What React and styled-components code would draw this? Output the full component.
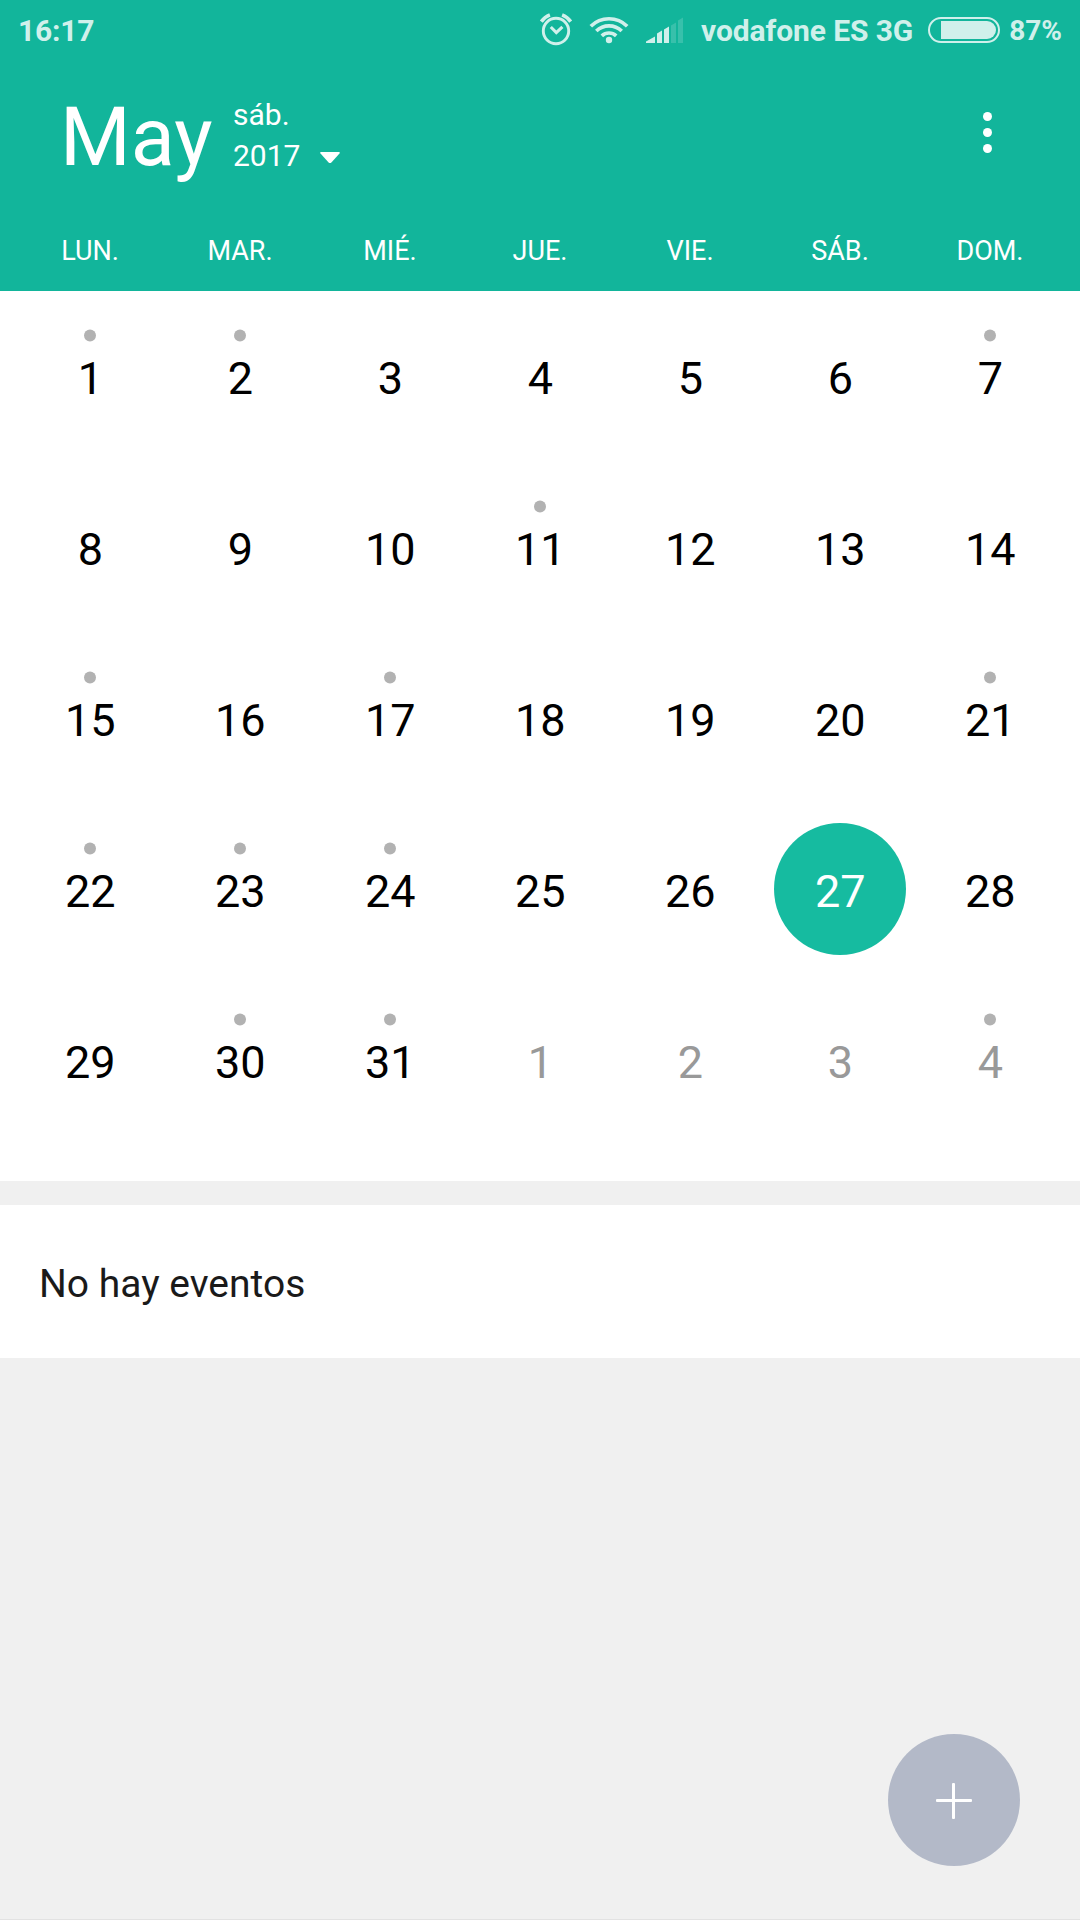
import React from "react";
import styled, { createGlobalStyle } from "styled-components";

const teal = "#12b59b";
const statusTint = "#d0f0eb";

const GlobalStyle = createGlobalStyle`
  * { box-sizing: border-box; }
  body { margin: 0; background: #f0f0f0; font-family: Roboto, "Liberation Sans", sans-serif; }
`;

const Screen = styled.div`
  width: 1080px;
  height: 1920px;
  display: flex;
  flex-direction: column;
  background: #f0f0f0;
  border-bottom: 1px solid #e2e2e2;
  overflow: hidden;
`;

const Header = styled.header`
  height: 291px;
  flex: none;
  display: flex;
  flex-direction: column;
  background: ${teal};
  color: #fff;
`;

const StatusBar = styled.div`
  height: 60px;
  display: flex;
  align-items: center;
  justify-content: space-between;
  padding: 0 18px 0 18px;
  color: ${statusTint};
`;

const StatusText = styled.span`
  font-size: ${(p) => p.$size || 30}px;
  font-weight: 700;
  letter-spacing: ${(p) => p.$tracking || 0}px;
  line-height: 40px;
  padding-top: 1px;
  white-space: nowrap;
`;

const StatusGroup = styled.div`
  display: flex;
  align-items: center;
`;

const StatusIcons = styled.svg`
  display: block;
  width: 150px;
  height: 60px;
  margin-right: 15.5px;
`;

const Battery = styled.div`
  width: 72px;
  height: 26px;
  margin: 0 9px 0 15px;
  padding: 2px 2px 2px 11px;
  border: 2px solid ${statusTint};
  border-radius: 13px;
`;

const BatteryLevel = styled.div`
  height: 18px;
  background: ${statusTint};
  border-radius: 0 9px 9px 0;
`;

const TitleRow = styled.div`
  height: 150px;
  display: flex;
  align-items: flex-start;
  padding: 0 88px 0 60px;
`;

const Month = styled.h1`
  margin: 30px 0 0;
  width: 173px;
  font-size: 81px;
  font-weight: 400;
  line-height: 96px;
`;

const DateInfo = styled.div`
  flex: 1;
  margin-top: 35px;
  font-size: 30px;
  line-height: 40px;
`;

const YearLine = styled.div`
  display: flex;
  align-items: center;
  gap: 20px;
  margin-top: 1px;
`;

const Caret = styled.svg`
  width: 20px;
  height: 12px;
  margin-top: 4px;
`;

const MenuButton = styled.button`
  display: flex;
  flex-direction: column;
  gap: 7px;
  margin: 52px 0 0;
  padding: 0;
  border: 0;
  background: none;
`;

const MenuDot = styled.span`
  width: 9px;
  height: 9px;
  border-radius: 50%;
  background: #fff;
`;

const WeekRow = styled.div`
  display: grid;
  grid-template-columns: repeat(7, 150px);
  padding: 21px 15px 0;
`;

const Weekday = styled.div`
  font-size: 27px;
  line-height: 40px;
  text-align: center;
`;

const Calendar = styled.main`
  height: 890px;
  flex: none;
  display: grid;
  grid-template-columns: repeat(7, 150px);
  grid-auto-rows: 171px;
  padding: 0 15px;
  background: #fff;
`;

const DayCell = styled.div`
  position: relative;
  display: flex;
  justify-content: center;
  padding-top: 19px;
`;

const DayNumber = styled.div`
  width: 132px;
  height: 132px;
  padding: 5px 0 0 ${(p) => (p.$narrow ? 1 : 0.4)}px;
  border-radius: 50%;
  font-size: 45px;
  line-height: 127px;
  text-align: center;
  color: ${(p) => (p.$selected ? "#fff" : p.$muted ? "#999" : "#000")};
  background: ${(p) => (p.$selected ? "#16bba0" : "transparent")};
`;

const EventDot = styled.span`
  position: absolute;
  top: 38px;
  left: 69px;
  width: 12px;
  height: 12px;
  border-radius: 50%;
  background: #b2b2b2;
  transform: translateY(0.5px);
`;

const EventCard = styled.section`
  height: 153px;
  flex: none;
  margin-top: 24px;
  padding: 5px 39px 0;
  background: #fff;
  color: #1a1a1a;
  font-size: 39px;
  line-height: 149px;
`;

const Footer = styled.footer`
  flex: 1;
  display: flex;
  justify-content: flex-end;
  align-items: flex-end;
  padding: 0 60px 53px 0;
`;

const AddButton = styled.button`
  width: 132px;
  height: 132px;
  padding: 0;
  border: 0;
  border-radius: 50%;
  background: #b3b9c8;
`;

const PlusIcon = styled.svg`
  display: block;
  width: 132px;
  height: 132px;
`;

const weekdays = ["LUN.", "MAR.", "MIÉ.", "JUE.", "VIE.", "SÁB.", "DOM."];
const eventDays = new Set([1, 2, 7, 11, 15, 17, 21, 22, 23, 24, 30, 31, 35]);
const days = Array.from({ length: 35 }, (_, i) => {
  const n = i + 1;
  return { id: n, label: n > 31 ? n - 31 : n, muted: n > 31, selected: n === 27, event: eventDays.has(n) };
});

export default function App() {
  return (
    <Screen>
      <GlobalStyle />
      <Header>
        <StatusBar>
          <StatusText $tracking={-0.2}>16:17</StatusText>
          <StatusGroup>
            <StatusIcons viewBox="536 0 150 60" fill="none" stroke={statusTint}>
              <circle cx="556" cy="31" r="12.7" strokeWidth="2.9" />
              <path d="M550.8 27l5.5 5.6 6.1-5.8" strokeWidth="3.1" />
              <path d="M541.3 21.6a19 19 0 0 1 8.6-6.7M570.7 21.6a19 19 0 0 0-8.6-6.7" strokeWidth="3.6" />
              <path d="M590.8 26.2a26 26 0 0 1 36.4 0M596.3 31a18.4 18.4 0 0 1 25.4 0M601.8 35.8a10.6 10.6 0 0 1 14.4 0" strokeWidth="3.7" />
              <circle cx="609" cy="40" r="3.2" fill={statusTint} stroke="none" />
              <g fill={statusTint} stroke="none">
                <path d="M646 43v-1.5l9-5V43zM657 43v-9.5l5-3V43zM664 43V29.5l5-3V43z" />
                <path opacity=".2" d="M671 43V25.5l5-3V43zM678 43V20.5l5-3V43z" />
              </g>
            </StatusIcons>
            <StatusText $tracking={-0.1}>vodafone ES 3G</StatusText>
            <Battery>
              <BatteryLevel />
            </Battery>
            <StatusText $size={28}>87%</StatusText>
          </StatusGroup>
        </StatusBar>
        <TitleRow>
          <Month>May</Month>
          <DateInfo>
            <div>sáb.</div>
            <YearLine>
              2017
              <Caret viewBox="0 0 20 12" fill="#fff">
                <path d="M.8 0h18.4q1 .6.3 1.4L11.4 10.4q-1.4 1.2-2.8 0L.5 1.4Q-.2.6.8 0z" />
              </Caret>
            </YearLine>
          </DateInfo>
          <MenuButton aria-label="Menú">
            <MenuDot />
            <MenuDot />
            <MenuDot />
          </MenuButton>
        </TitleRow>
        <WeekRow>
          {weekdays.map((d) => (
            <Weekday key={d}>{d}</Weekday>
          ))}
        </WeekRow>
      </Header>
      <Calendar>
        {days.map((d) => (
          <DayCell key={d.id}>
            {d.event && <EventDot />}
            <DayNumber $selected={d.selected} $muted={d.muted} $narrow={d.label < 10}>{d.label}</DayNumber>
          </DayCell>
        ))}
      </Calendar>
      <EventCard>No hay eventos</EventCard>
      <Footer>
        <AddButton aria-label="Añadir">
          <PlusIcon viewBox="0 0 132 132" fill="#fff">
            <rect x="48" y="65" width="36" height="3" rx="1" />
            <rect x="64" y="49" width="3" height="36" rx="1" />
          </PlusIcon>
        </AddButton>
      </Footer>
    </Screen>
  );
}
